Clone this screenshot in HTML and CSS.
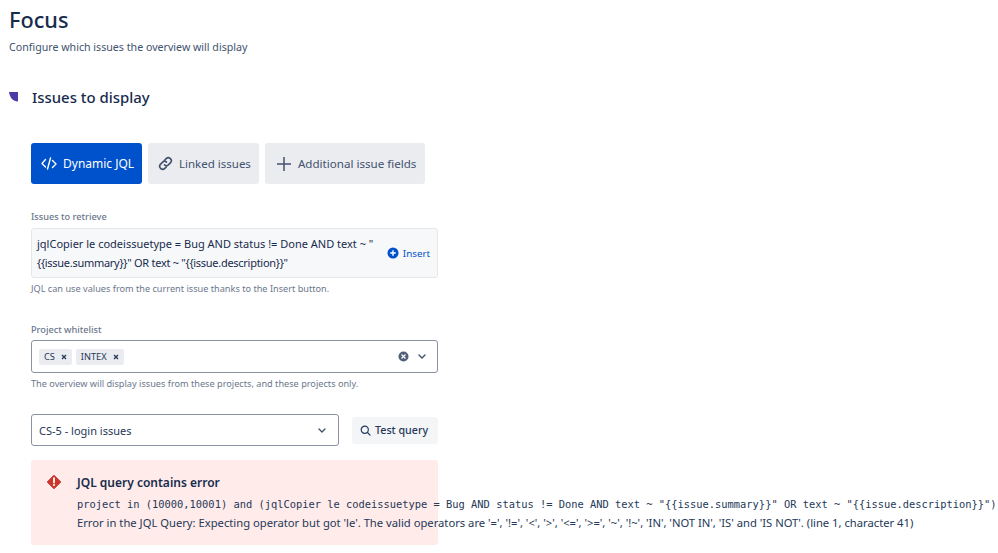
FILE: index.html
```html
<!DOCTYPE html>
<html lang="en">
<head>
<meta charset="utf-8">
<title>Focus</title>
<link rel="stylesheet" href="styles.css">
</head>
<body>
<header class="page-head">
  <h1>Focus</h1>
  <p>Configure which issues the overview will display</p>
</header>
<section class="section-title">
  <svg class="mark" width="10" height="10" viewBox="0 0 10 10"><path d="M0 0H9V9.500C4 9.500 1 6 0 0Z" fill="#4a3ba6"/></svg>
  <h2>Issues to display</h2>
</section>
<main class="content">
  <nav class="tabs">
    <button class="tab active">
      <svg width="16" height="16" viewBox="0 0 16 16" fill="none" stroke="#fff" stroke-width="1.400" stroke-linecap="round" stroke-linejoin="round"><path d="M4.500 3.500 1 7.500l3.500 3.500M9.500 2 6.500 13M11.500 4.500 15 8l-3.500 3.500"/></svg>
      <span>Dynamic JQL</span>
    </button>
    <button class="tab">
      <svg width="15" height="15" viewBox="0 0 16 16" fill="none" stroke="#42526e" stroke-width="1.700" stroke-linecap="round"><path d="M7 4.500 8.700 2.800a2.900 2.900 0 0 1 4.500 4.500L11 9.500a2.900 2.900 0 0 1-4 0"/><path d="M9 11.500 7.300 13.200a2.900 2.900 0 0 1-4.500-4.500L5 6.500a2.900 2.900 0 0 1 4 0"/></svg>
      <span>Linked issues</span>
    </button>
    <button class="tab wide">
      <svg width="16" height="16" viewBox="0 0 16 16" fill="none" stroke="#42526e" stroke-width="1.500"><path d="M8 1v14M1 8h14"/></svg>
      <span>Additional issue fields</span>
    </button>
  </nav>

  <div class="field first">
    <label class="label">Issues to retrieve</label>
    <div class="jql">
      <div class="jql-text">jqlCopier le codeissuetype = Bug AND status != Done AND text ~ "<br><span class="jql-braces">{{issue.summary}}" OR text ~ "{{issue.description}}"</span></div>
      <div class="insert">
        <svg width="12" height="12" viewBox="0 0 12 12"><circle cx="6" cy="6" r="5.500" fill="#0052cc"/><path d="M6 3.200v5.600M3.200 6h5.600" stroke="#fff" stroke-width="1.400"/></svg>
        <span>Insert</span>
      </div>
    </div>
    <p class="help">JQL can use values from the current issue thanks to the Insert button.</p>
  </div>

  <div class="field second">
    <label class="label">Project whitelist</label>
    <div class="select multi">
      <span class="tag">CS <svg width="6" height="6" viewBox="0 0 6 6"><path d="M1 1l4 4M5 1 1 5" stroke="#253858" stroke-width="1.300"/></svg></span>
      <span class="tag">INTEX <svg width="6" height="6" viewBox="0 0 6 6"><path d="M1 1l4 4M5 1 1 5" stroke="#253858" stroke-width="1.300"/></svg></span>
      <span class="spacer"></span>
      <svg class="clear" width="11" height="11" viewBox="0 0 11 11"><circle cx="5.500" cy="5.500" r="5" fill="#505f79"/><path d="M3.500 3.500l4 4M7.500 3.500l-4 4" stroke="#fff" stroke-width="1.200"/></svg>
      <svg class="chev" width="8" height="5" viewBox="0 0 8 5" fill="none"><path d="M1 1l3 3 3-3" stroke="#42526e" stroke-width="1.400" stroke-linecap="round" stroke-linejoin="round"/></svg>
    </div>
    <p class="help">The overview will display issues from these projects, and these projects only.</p>
  </div>

  <div class="test-row">
    <div class="select single">
      <span>CS-5 - login issues</span>
      <span class="spacer"></span>
      <svg class="chev" width="8" height="5" viewBox="0 0 8 5" fill="none"><path d="M1 1l3 3 3-3" stroke="#42526e" stroke-width="1.400" stroke-linecap="round" stroke-linejoin="round"/></svg>
    </div>
    <button class="test">
      <svg width="11" height="11" viewBox="0 0 12 12" fill="none" stroke="#253858" stroke-width="1.300" stroke-linecap="round"><circle cx="5.200" cy="5.200" r="3.900"/><path d="M8.200 8.200 11 11"/></svg>
      <span>Test query</span>
    </button>
  </div>

  <div class="error">
    <svg class="err-icon" width="14" height="14" viewBox="0 0 14 14"><path d="M7 0.200 13.800 7 7 13.800 0.200 7Z" fill="#c9372c" stroke="#c9372c" stroke-linejoin="round"/><path d="M7 3.200v4.400" stroke="#fff" stroke-width="1.800" stroke-linecap="round"/><circle cx="7" cy="10" r="1.100" fill="#fff"/></svg>
    <div class="err-body">
      <h3>JQL query contains error</h3>
      <code>project in (10000,10001) and (jqlCopier le codeissuetype = Bug AND status != Done AND text ~ "{{issue.summary}}" OR text ~ "{{issue.description}}")</code>
      <p>Error in the JQL Query: Expecting operator but got 'le'. The valid operators are '=', '!=', '&lt;', '&gt;', '&lt;=', '&gt;=', '~', '!~', 'IN', 'NOT IN', 'IS' and 'IS NOT'. (line 1, character 41)</p>
    </div>
  </div>
</main>
</body>
</html>
```
FILE: styles.css
```css
* { box-sizing: border-box; }
html, body { margin: 0; padding: 0; }
body {
  width: 998px;
  height: 553px;
  overflow: hidden;
  background: #fff;
  color: #172b4d;
  font-family: "Noto Sans", "Open Sans", sans-serif;
  font-size: 12px;
}
button { font-family: inherit; border: 0; cursor: pointer; }
h1, h2, h3, p { margin: 0; }

.page-head { padding: 5px 0 0 9px; }
.page-head h1 { font-size: 21.700px; line-height: 30px; font-weight: 500; color: #172b4d; }
.page-head p { font-size: 10.650px; line-height: 16px; margin-top: 4px; color: #42526e; }

.section-title { display: flex; align-items: center; padding: 31px 0 0 9px; }
.section-title h2 { font-size: 14.900px; line-height: 22px; font-weight: 500; margin-left: 13px; }

.content { padding: 35px 0 0 31px; width: 438px; }

.tabs { display: flex; gap: 6px; }
.tab {
  display: flex; flex: none; align-items: center; gap: 6px; white-space: nowrap;
  height: 41px; padding: 0 8px 0 10px; border-radius: 3px;
  background: #ebecf0; color: #42526e; font-size: 11.500px;
}
.tab.active { background: #0052cc; color: #fff; font-size: 12px; width: 111px; padding-right: 0; }
.tab.wide { width: 160px; padding-left: 11px; padding-right: 0; font-size: 11.600px; }

.label { display: block; font-size: 9.200px; line-height: 14px; font-weight: 500; color: #6b778c; }
.help { font-size: 9.160px; line-height: 13px; color: #6b778c; margin-top: 4px; }
.field.first { margin-top: 26px; }
.field.first .label { margin-bottom: 4px; }
.field.second { margin-top: 28px; }
.field.second .label { margin-bottom: 3px; }

.jql {
  display: flex; align-items: center; height: 50px; padding: 0 7px 0 5px;
  background: #f7f8f9; border: 1px solid #e4e6ea; border-radius: 3px;
}
.jql-text { flex: 1; font-size: 11px; line-height: 19px; color: #172b4d; white-space: nowrap; }
.jql-braces { letter-spacing: -0.280px; }
.insert { display: flex; align-items: center; gap: 4px; color: #0052cc; font-size: 9.800px; }

.select {
  display: flex; align-items: center; background: #fff;
  border: 1px solid #8993a4; border-radius: 3px;
}
.select.multi { height: 33px; padding: 0 11px 0 7px; gap: 4px; }
.select.single { height: 32px; width: 308px; padding: 0 12px 0 7px; font-size: 11px; color: #253858; }
.spacer { flex: 1; }
.tag {
  display: flex; align-items: center; gap: 6px; height: 16px; padding: 0 5px;
  border-radius: 2px; background: #ebecf0; color: #253858; font-size: 9.200px;
}
.clear { margin-right: 5px; }

.test-row { display: flex; align-items: center; gap: 13px; margin-top: 24px; }
.test {
  display: flex; align-items: center; gap: 4px; height: 27px; width: 86px; padding: 0 0 0 8px;
  background: #f4f5f7; color: #253858; border-radius: 3px; font-size: 10.700px; font-weight: 500;
}

.error {
  display: flex; margin-top: 14px; width: 407px; height: 85px;
  padding: 15px 0 0 16px; background: #ffebe9; border-radius: 3px; white-space: nowrap;
}
.err-icon { flex: none; }
.err-body { margin-left: 16px; }
.err-body h3 { font-size: 12px; line-height: 16px; font-weight: 600; color: #172b4d; }
.err-body code { display: block; margin-top: 5px; font-family: "DejaVu Sans Mono", monospace; font-size: 10.400px; line-height: 16px; color: #253858; }
.err-body p { font-size: 11.230px; line-height: 16px; margin-top: 3px; color: #253858; }
```
